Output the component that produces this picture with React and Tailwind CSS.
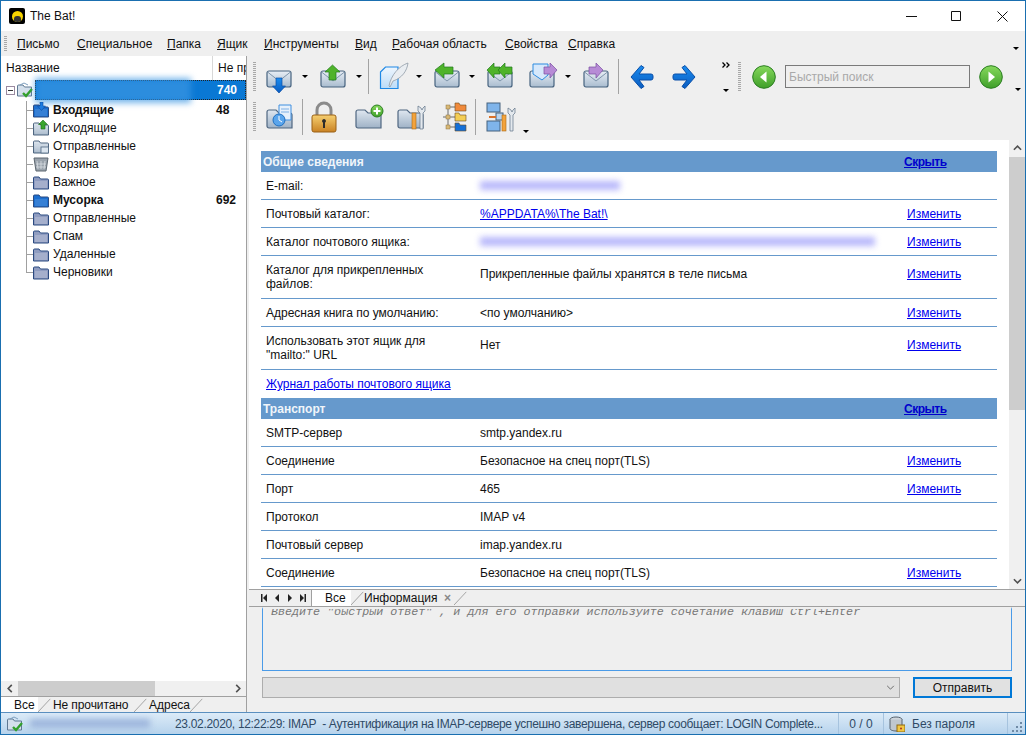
import React from "react";

const BLUE = "text-[#0000ee]";

function Defs() {
  return (
    <svg className="absolute w-0 h-0">
      <defs>
        <linearGradient id="env" x1="0" y1="0" x2="0" y2="1">
          <stop offset="0" stopColor="#e8eef5" />
          <stop offset="1" stopColor="#a9bccf" />
        </linearGradient>
        <linearGradient id="folder" x1="0" y1="0" x2="0" y2="1">
          <stop offset="0" stopColor="#dfe7f0" />
          <stop offset="1" stopColor="#9fb2c6" />
        </linearGradient>
        <linearGradient id="green" x1="0" y1="0" x2="0" y2="1">
          <stop offset="0" stopColor="#86d95c" />
          <stop offset="1" stopColor="#3f9f2a" />
        </linearGradient>
        <linearGradient id="page" x1="0" y1="0" x2="0" y2="1">
          <stop offset="0" stopColor="#eef6fe" />
          <stop offset="1" stopColor="#bcdcf8" />
        </linearGradient>
        <linearGradient id="blueArrow" x1="0" y1="0" x2="0" y2="1">
          <stop offset="0" stopColor="#1a8cf0" />
          <stop offset="1" stopColor="#0a5cc0" />
        </linearGradient>
        <linearGradient id="lock" x1="0" y1="0" x2="0" y2="1">
          <stop offset="0" stopColor="#f6cf70" />
          <stop offset="1" stopColor="#c98224" />
        </linearGradient>
      </defs>
    </svg>
  );
}

function Caret({ className = "" }) {
  return <span className={"w-0 h-0 border-x-[3px] border-x-transparent border-t-[3px] border-t-black shrink-0 " + className} />;
}

function Grip({ className = "" }) {
  return <span className={"w-[3px] shrink-0 bg-[repeating-linear-gradient(to_bottom,#a8a8a8_0,#a8a8a8_1px,transparent_1px,transparent_2px)] " + className} />;
}

function Sep({ className = "" }) {
  return <span className={"w-px bg-[#a3a3a3] shrink-0 " + className} />;
}

// envelope toolbar icon, kind picks the overlay arrow
function Envelope({ kind, className = "" }) {
  return (
    <svg viewBox="0 0 26 26" className={"w-[26px] h-[26px] shrink-0 overflow-visible " + className}>
      <rect x="1" y="7" width="24" height="16" rx="2" fill="url(#env)" stroke="#47637f" strokeWidth="1.2" />
      <path d="M1.500 8 L13 17 L24.500 8" fill="none" stroke="#7e95ab" strokeWidth="1" />
      {kind === "down" && <path d="M10 14h6v8h3.500L13 29l-6.500-7H10z" fill="url(#blueArrow)" stroke="#0b4ea5" strokeWidth=".7" />}
      {kind === "up" && <path d="M12.500 1l7.500 7h-4v8H9V8H5z" fill="#4fb32a" stroke="#1f7a1c" strokeWidth=".7" />}
      {kind === "reply" && <path d="M1 6l9-7v4h9v7h-9v4z" fill="#4fb32a" stroke="#1f7a1c" strokeWidth=".7" />}
      {kind === "replyAll" && (
        <g fill="#4fb32a" stroke="#1f7a1c" strokeWidth=".7">
          <path d="M0 6l7-7v4h6v7H7v4z" />
          <path d="M11 6l7-7v4h7v7h-7v4z" />
        </g>
      )}
      {kind === "forward" && <path d="M20 6l-7-7v4H6v7h7v4z" fill="#b78bd6" stroke="#7a4ea0" strokeWidth=".7" />}
    </svg>
  );
}

function ForwardDoc() {
  return (
    <svg viewBox="0 0 28 26" className="w-[28px] h-[26px] shrink-0 overflow-visible">
      <rect x="1" y="7" width="24" height="16" rx="2" fill="url(#env)" stroke="#47637f" strokeWidth="1.2" />
      <path d="M4 0h15v11l-6 5-9-6z" fill="#d6e8fb" stroke="#2c8be0" strokeWidth="1" />
      <path d="M28 6l-7-7v4h-6v7h6v4z" fill="#b78bd6" stroke="#7a4ea0" strokeWidth=".7" />
    </svg>
  );
}

function NewMail() {
  return (
    <svg viewBox="0 0 28 28" className="w-[28px] h-[28px] shrink-0 overflow-visible">
      <path d="M.5 9l5-5H18v21.500H.5z" fill="url(#page)" stroke="#1e88e5" strokeWidth="1.200" />
      <path d="M9 23C11 12 19 3 28 0c-1 8-6 15-15 18l-3 6z" fill="#e9edf1" stroke="#8f9ba6" strokeWidth=".8" />
    </svg>
  );
}

function NavArrow({ dir }) {
  return (
    <svg viewBox="0 0 24 26" className="w-[24px] h-[26px] shrink-0">
      <path
        d={dir === "left" ? "M11 1.500L1 13l10 11.500 3-2-5-6.500h12a2 2 0 0 0 2-2v-2a2 2 0 0 0-2-2H9l5-6.500z" : "M13 1.500L23 13 13 24.500l-3-2 5-6.500H3a2 2 0 0 1-2-2v-2a2 2 0 0 1 2-2h12l-5-6.500z"}
        fill="url(#blueArrow)"
        stroke="#0a4fa8"
        strokeWidth="1"
      />
    </svg>
  );
}

function GreenRound({ dir }) {
  return (
    <svg viewBox="0 0 24 24" className="w-[24px] h-[24px] shrink-0">
      <circle cx="12" cy="12" r="11.300" fill="url(#green)" stroke="#2b7d22" strokeWidth="1" />
      <path d={dir === "left" ? "M14.500 6.500v11L8 12z" : "M9.500 6.500v11L16 12z"} fill="#fff" />
    </svg>
  );
}

function Folder({ className = "w-[28px] h-[26px]", children }) {
  return (
    <svg viewBox="0 0 28 26" className={"shrink-0 overflow-visible " + className}>
      <path d="M1 8a2 2 0 0 1 2-2h7l3 3h11a2 2 0 0 1 2 2v13H3a2 2 0 0 1-2-2z" fill="url(#folder)" stroke="#4f6680" strokeWidth="1.200" />
      {children}
    </svg>
  );
}

function Lock() {
  return (
    <svg viewBox="0 0 26 32" className="w-[26px] h-[32px] shrink-0">
      <path d="M6 14V9a7 7 0 0 1 14 0v5" fill="none" stroke="#8b8b8b" strokeWidth="3" />
      <rect x="1" y="14" width="24" height="17" rx="2" fill="url(#lock)" stroke="#9a6116" />
      <path d="M13 18a2 2 0 0 1 1 3.700V27h-2v-5.300A2 2 0 0 1 13 18z" fill="#2b2b2b" />
    </svg>
  );
}

function FolderTree() {
  const cols = ["#f08a3c", "#f3cd55", "#1470d8"];
  return (
    <svg viewBox="0 0 24 30" className="w-[24px] h-[30px] shrink-0">
      <path d="M5 5v20M0 15h5M5 5h8M5 15h8M5 25h8" stroke="#6b6b6b" fill="none" />
      {cols.map((c, i) => (
        <g key={c}>
          <rect x="3" y={3 + i * 10} width="4" height="4" fill="#d8b877" stroke="#8d7440" strokeWidth=".5" />
          <path d={`M12 ${1 + i * 10}h4l1 2h6v6H12z`} fill={c} stroke="#6d4a20" strokeWidth=".6" />
        </g>
      ))}
    </svg>
  );
}

function Wrench({ x = 14 }) {
  return (
    <g transform={`translate(${x} 0)`}>
      <rect x="0" y="9" width="4" height="16" fill="#f3a33c" stroke="#a96a17" strokeWidth=".6" />
      <path d="M6 2v5l2 2v16h3V9l2-2V2l-2 2-1 2-1-2z" fill="#e4e9ee" stroke="#5f7286" strokeWidth=".7" />
    </g>
  );
}

function NetTools() {
  return (
    <svg viewBox="0 0 28 30" className="w-[28px] h-[30px] shrink-0 overflow-visible">
      <rect x="1" y="1" width="13" height="9" fill="#7fb4ea" stroke="#47637f" />
      <rect x="1" y="19" width="13" height="10" fill="#7fb4ea" stroke="#47637f" />
      <rect x="10" y="11" width="7" height="7" fill="#b9d4ef" stroke="#47637f" />
      <path d="M3 15h7" stroke="#d9722c" strokeWidth="2" />
      <g transform="translate(2 4)"><Wrench x={14} /></g>
    </svg>
  );
}

// 16px tree icons
function TreeIcon({ type }) {
  const plain = type === "plain" || type === "junk" || type === "inbox";
  const fill = type === "plain" ? "#8f9cc0" : type === "junk" || type === "inbox" ? "#1c6fd0" : "url(#folder)";
  if (type === "trash") {
    return (
      <svg viewBox="0 0 16 16" className="w-[16px] h-[16px] shrink-0">
        <path d="M1 2h14l-2 13H3z" fill="#9aa3ac" stroke="#5d6770" />
        <path d="M4 5l1 8M8 5v8M12 5l-1 8M3 8h10M3 11h10" stroke="#d8dde2" strokeWidth=".8" />
      </svg>
    );
  }
  return (
    <svg viewBox="0 0 16 16" className="w-[16px] h-[16px] shrink-0">
      <path d="M.5 4a1 1 0 0 1 1-1H6l1.500 2h7a1 1 0 0 1 1 1v9H.5z" fill={fill} stroke={plain ? "#2b4a80" : "#4f6680"} />
      <path d="M2 7h12v7H2z" fill="#ffffff" opacity={type === "plain" ? 0.2 : 0.12} />
      {type === "inbox" && <path d="M7 0h3v4h2.500L8.500 8.500 4.500 4H7z" fill="#1c7be0" stroke="#0c4aa0" strokeWidth=".6" />}
      {type === "outbox" && <path d="M10 0l4.500 4.500H12V9H8V4.500H5.500z" fill="#3aa52e" stroke="#1c6d1a" strokeWidth=".6" />}
      {type === "sent" && <rect x="8" y="9" width="7.500" height="6" fill="#dbe5ef" stroke="#4f6680" strokeWidth=".8" />}
    </svg>
  );
}

function AccountIcon() {
  return (
    <svg viewBox="0 0 16 16" className="w-[16px] h-[16px] shrink-0">
      <path d="M.5 4a1 1 0 0 1 1-1H6l1.500 2h7v9H.5z" fill="#d5e0ec" stroke="#5f7892" />
      <path d="M3 3l4-2 4 2" fill="none" stroke="#7fa0c0" />
      <path d="M6 11l3 3 6-7" fill="none" stroke="#33a02c" strokeWidth="2.400" />
    </svg>
  );
}

function Mnemonic({ text }) {
  return (
    <span>
      <u>{text[0]}</u>
      {text.slice(1)}
    </span>
  );
}

const menu = [
  ["Письмо", "w-[60px]"],
  ["Специальное", "w-[90px]"],
  ["Папка", "w-[50px]"],
  ["Ящик", "w-[47px]"],
  ["Инструменты", "w-[91px]"],
  ["Вид", "w-[37px]"],
  ["Рабочая область", "w-[113px]"],
  ["Свойства", "w-[63px]"],
  ["Справка", "w-[60px]"],
];

const folders = [
  ["Входящие", "inbox", "48", true],
  ["Исходящие", "outbox"],
  ["Отправленные", "sent"],
  ["Корзина", "trash"],
  ["Важное", "plain"],
  ["Мусорка", "junk", "692", true],
  ["Отправленные", "plain"],
  ["Спам", "plain"],
  ["Удаленные", "plain"],
  ["Черновики", "plain"],
];

function Section({ title }) {
  return (
    <div className="h-[21px] bg-[#6699cc] flex items-center pl-[2px] text-[#f0f5fa] font-bold">
      <span className="w-[641px]">{title}</span>
      <a className="underline text-[#0000cc] tracking-[-0.5px]">Скрыть</a>
    </div>
  );
}

function Row({ label, value, link, valueLink, blur, tall, last }) {
  return (
    <div className={"flex border-[#6699cc] " + (tall || "h-[28px]") + (last ? "" : " border-b") + (tall ? " items-start" : " items-center")}>
      <div className={"w-[219px] pl-[5px] pr-[40px] shrink-0 leading-[14px] " + (tall ? "pt-[7px]" : "")}>{label}</div>
      <div className={"w-[427px] shrink-0 leading-[14px] " + (tall ? "pt-[11px]" : "")}>
        {valueLink && <a className={"underline " + BLUE}>{value}</a>}
        {blur && <div className={"h-[9px] bg-[#b7b7fb] blur-[3px] " + blur} />}
        {!valueLink && !blur && value}
      </div>
      {link && <a className={"underline leading-[14px] " + BLUE + (tall ? " pt-[11px]" : "")}>Изменить</a>}
    </div>
  );
}

function Toolbar1() {
  return (
    <div className="h-[41px] flex items-center shrink-0">
      <Grip className="h-[30px] ml-[4px]" />
      <Envelope kind="down" className="ml-[10px]" />
      <Caret className="ml-[10px]" />
      <Envelope kind="up" className="ml-[12px]" />
      <Caret className="ml-[10px]" />
      <Sep className="h-[35px] ml-[6px]" />
      <div className="ml-[11px]"><NewMail /></div>
      <Caret className="ml-[8px]" />
      <Envelope kind="reply" className="ml-[12px]" />
      <Caret className="ml-[9px]" />
      <Envelope kind="replyAll" className="ml-[12px]" />
      <div className="ml-[16px]"><ForwardDoc /></div>
      <Caret className="ml-[8px]" />
      <Envelope kind="forward" className="ml-[12px]" />
      <Sep className="h-[35px] ml-[9px]" />
      <div className="ml-[11px]"><NavArrow dir="left" /></div>
      <div className="ml-[18px]"><NavArrow dir="right" /></div>
      <div className="ml-[26px] w-[8px] h-[30px] flex flex-col justify-between items-center shrink-0">
        <svg viewBox="0 0 8 6" className="w-[8px] h-[6px] shrink-0">
          <path d="M.5.500L3 3 .5 5.500M4.500.500L7 3 4.500 5.500" fill="none" stroke="#000" strokeWidth="1.300" />
        </svg>
        <Caret />
      </div>
      <Grip className="h-[30px] ml-[8px]" />
      <div className="ml-[11px]"><GreenRound dir="left" /></div>
      <div className="ml-[9px] w-[185px] h-[23px] border border-[#7a7a7a] flex items-center pl-[3px] text-[#a9a9a9]">Быстрый поиск</div>
      <div className="ml-[9px]"><GreenRound dir="right" /></div>
      <Caret className="ml-[12px] self-end mb-[6px]" />
    </div>
  );
}

function Toolbar2() {
  return (
    <div className="h-[43px] flex items-center shrink-0 pb-[3px]">
      <Grip className="h-[30px] ml-[4px]" />
      <div className="ml-[10px]">
        <Folder>
          <path d="M13 1h12v15H13z" fill="#e6f0fb" stroke="#3f8fe0" />
          <path d="M15 5h8M15 8h8" stroke="#7fb0e4" />
          <circle cx="13" cy="16" r="6" fill="#5aa5ec" stroke="#1f6fc0" />
          <path d="M13 12v4l3 2" fill="none" stroke="#fff" />
        </Folder>
      </div>
      <Sep className="h-[36px] ml-[8px]" />
      <div className="ml-[8px]"><Lock /></div>
      <div className="ml-[18px]">
        <Folder>
          <circle cx="22" cy="7" r="6" fill="url(#green)" stroke="#2b7d22" />
          <path d="M22 3.500v7M18.500 7h7" stroke="#fff" strokeWidth="2" />
        </Folder>
      </div>
      <div className="ml-[14px]">
        <Folder><Wrench x={15} /></Folder>
      </div>
      <div className="ml-[18px]"><FolderTree /></div>
      <Sep className="h-[36px] ml-[8px]" />
      <div className="ml-[10px]"><NetTools /></div>
      <Caret className="ml-[9px] self-end mb-[4px]" />
    </div>
  );
}

function Scrollbar() {
  return (
    <div className="w-[16px] bg-[#f0f0f0] flex flex-col items-center shrink-0 text-[#505050]">
      <svg viewBox="0 0 10 6" className="w-[9px] h-[6px] mt-[5px] shrink-0">
        <path d="M1 5l4-4 4 4" fill="none" stroke="currentColor" strokeWidth="1.800" />
      </svg>
      <div className="w-[16px] h-[253px] bg-[#cdcdcd] mt-[6px] shrink-0" />
      <svg viewBox="0 0 10 6" className="w-[9px] h-[6px] mt-auto mb-[5px] shrink-0">
        <path d="M1 1l4 4 4-4" fill="none" stroke="currentColor" strokeWidth="1.800" />
      </svg>
    </div>
  );
}

function Slant() {
  return (
    <svg viewBox="0 0 16 16" className="w-[14px] h-[16px] shrink-0">
      <path d="M0 16L14 1" stroke="#9a9a9a" fill="none" />
    </svg>
  );
}

function NavGlyph({ d }) {
  return (
    <svg viewBox="0 0 8 8" className="w-[8px] h-[8px] shrink-0">
      <path d={d} fill="#222" />
    </svg>
  );
}

function LeftPane() {
  return (
    <div className="w-[246px] shrink-0 bg-white flex flex-col border-r border-[#a0a0a0]">
      <div className="h-[24px] flex items-center shrink-0 whitespace-nowrap">
        <span className="w-[211px] pl-[5px] shrink-0">Название</span>
        <span className="border-l border-[#d8d8d8] h-full flex items-center pl-[5px] overflow-hidden">Не пр</span>
      </div>
      <div className="flex items-center h-[20px] shrink-0 relative">
        <span className="ml-[5px] w-[9px] h-[9px] border border-[#9a8aa0] flex items-center justify-center shrink-0">
          <span className="w-[5px] h-px bg-[#333]" />
        </span>
        <span className="ml-[2px]"><AccountIcon /></span>
        <div className="ml-[2px] flex-1 h-[20px] bg-[#0a78d4] border border-dotted border-[#222] flex items-center justify-end pr-[8px] text-white font-bold">
          740
        </div>
        {/* blurred account name over the selection */}
        <div className="absolute left-[34px] top-[-2px] w-[156px] h-[25px] bg-[#3b95e2]/70 blur-[3px]" />
      </div>
      <div className="relative pl-[25px] mt-px flex-1 min-h-0">
        <span className="absolute left-[25px] top-0 h-[172px] w-px bg-[#a0a0a0]" />
        {folders.map(([name, type, count, bold], i) => (
          <div key={name + i} className="h-[18px] flex items-center">
            <span className="w-[7px] h-px bg-[#a0a0a0] shrink-0" />
            <TreeIcon type={type} />
            <span className={"ml-[4px] w-[163px] shrink-0 " + (bold ? "font-bold" : "")}>{name}</span>
            {count && <span className="font-bold">{count}</span>}
          </div>
        ))}
      </div>
      <div className="h-[15px] bg-[#f0f0f0] flex items-center shrink-0">
        <svg viewBox="0 0 6 10" className="w-[6px] h-[9px] ml-[6px] shrink-0">
          <path d="M5 1L1 5l4 4" fill="none" stroke="#505050" strokeWidth="1.800" />
        </svg>
        <div className="w-[137px] h-full bg-[#cdcdcd] ml-[5px]" />
        <svg viewBox="0 0 6 10" className="w-[6px] h-[9px] ml-auto mr-[5px] shrink-0">
          <path d="M1 1l4 4-4 4" fill="none" stroke="#505050" strokeWidth="1.800" />
        </svg>
      </div>
      <div className="h-[16px] bg-[#efefef] border-t border-[#a0a0a0] flex items-center shrink-0 leading-none whitespace-nowrap">
        <span className="h-full w-[37px] bg-white flex items-center pl-[13px] shrink-0">Все</span>
        <Slant />
        <span className="w-[82px] pl-[1px] shrink-0 tracking-[-0.1px]">Не прочитано</span>
        <Slant />
        <span className="pl-[1px]">Адреса</span>
        <Slant />
      </div>
    </div>
  );
}

function InfoPanel() {
  return (
    <div className="h-[449px] bg-white flex shrink-0">
      <div className="flex-1 min-w-0 overflow-hidden pl-[12px] pr-[12px] pt-[11px]">
        <Section title="Общие сведения" />
        <Row label="E-mail:" blur="w-[140px]" />
        <Row label="Почтовый каталог:" value="%APPDATA%\The Bat!\" valueLink link />
        <Row label="Каталог почтового ящика:" blur="w-[395px]" link />
        <Row label="Каталог для прикрепленных файлов:" value="Прикрепленные файлы хранятся в теле письма" link tall="h-[43px]" />
        <Row label="Адресная книга по умолчанию:" value="<по умолчанию>" link />
        <Row label={'Использовать этот ящик для "mailto:" URL'} value="Нет" link tall="h-[43px]" />
        <div className="h-[28px] flex items-center pl-[5px]">
          <a className={"underline " + BLUE}>Журнал работы почтового ящика</a>
        </div>
        <Section title="Транспорт" />
        <Row label="SMTP-сервер" value="smtp.yandex.ru" />
        <Row label="Соединение" value="Безопасное на спец порт(TLS)" link />
        <Row label="Порт" value="465" link />
        <Row label="Протокол" value="IMAP v4" />
        <Row label="Почтовый сервер" value="imap.yandex.ru" />
        <Row label="Соединение" value="Безопасное на спец порт(TLS)" link />
      </div>
      <Scrollbar />
    </div>
  );
}

function ReplyPanel() {
  return (
    <div className="flex-1 min-h-0 pl-[13px] pr-[13px] flex flex-col">
      <div className="h-[64px] border-x border-b border-t-2 border-x-[#4a9be8] border-b-[#4a9be8] border-t-[#efefef] overflow-hidden shrink-0 pl-[8px]">
        <div className="font-['Liberation_Mono',monospace] italic text-[#777] text-[11.7px] leading-[14px] mt-[-4px] whitespace-nowrap">
          {'Введите  "быстрый ответ" , и для его отправки используйте сочетание клавиш  Ctrl+Enter'}
        </div>
      </div>
      <div className="flex mt-[6px] shrink-0">
        <div className="w-[638px] h-[21px] bg-[#e0e0e0] border border-[#adadad] flex items-center justify-end pr-[4px]">
          <svg viewBox="0 0 10 6" className="w-[9px] h-[5px]">
            <path d="M1 1l4 4 4-4" fill="none" stroke="#555" />
          </svg>
        </div>
        <button className="ml-[13px] w-[99px] h-[21px] bg-[#e1e1e1] border-2 border-[#0078d7] flex items-center justify-center">Отправить</button>
      </div>
    </div>
  );
}

function StatusBar() {
  return (
    <div className="h-[22px] flex items-stretch shrink-0 border-t border-[#5a8fbf] bg-[linear-gradient(to_bottom,#dcebf8,#b7d3ec)] text-[#2f4a66]">
      <div className="w-[168px] flex items-center pl-[6px] shrink-0">
        <AccountIcon />
        <div className="ml-[7px] w-[120px] h-[9px] bg-[#9db5dc] blur-[3px]" />
      </div>
      <div className="w-[670px] shrink-0 flex items-center pl-[6px] border-r border-[#a6c3de] whitespace-nowrap overflow-hidden tracking-[-0.32px]">
        23.02.2020, 12:22:29: IMAP&nbsp; - Аутентификация на IMAP-сервере успешно завершена, сервер сообщает: LOGIN Complete...
      </div>
      <div className="w-[45px] shrink-0 flex items-center justify-center border-r border-[#a6c3de]">0 / 0</div>
      <div className="w-[124px] shrink-0 flex items-center pl-[5px] border-r border-[#a6c3de]">
        <svg viewBox="0 0 16 16" className="w-[16px] h-[16px] shrink-0">
          <ellipse cx="7" cy="3.500" rx="6" ry="2.500" fill="#d0d6dc" stroke="#56626e" />
          <path d="M1 3.500v9c0 1.500 3 2.500 6 2.500s6-1 6-2.500v-9" fill="#bfc7cf" stroke="#56626e" />
          <rect x="8" y="9" width="8" height="7" fill="#f2c744" stroke="#8d6a10" />
          <circle cx="12" cy="12.500" r="1" fill="#a32" />
        </svg>
        <span className="ml-[7px]">Без пароля</span>
      </div>
      <div className="flex-1 flex items-end justify-end pb-[2px] pr-[2px]">
        <svg viewBox="0 0 11 11" className="w-[11px] h-[11px]">
          <path d="M8 1h2v2H8zM4 5h2v2H4zM8 5h2v2H8zM0 9h2v2H0zM4 9h2v2H4zM8 9h2v2H8z" fill="#6f8aa5" />
        </svg>
      </div>
    </div>
  );
}

export default function App() {
  return (
    <div className="w-[1026px] h-[735px] border border-[#1a6fb0] bg-[#efefef] flex flex-col overflow-hidden text-[12px] text-[#111] font-['Liberation_Sans',sans-serif]">
      <Defs />
      {/* Title bar */}
      <div className="h-[30px] bg-white flex items-center shrink-0 whitespace-nowrap">
        <span className="ml-[8px] w-[16px] h-[16px] bg-black rounded-[2px] flex items-center justify-center shrink-0">
          <span className="w-[11px] h-[11px] rounded-full bg-[#f7d400] flex items-end justify-center overflow-hidden">
            <span className="w-[7px] h-[6px] bg-[#333] rounded-t-[3px]" />
          </span>
        </span>
        <span className="ml-[5px]">The Bat!</span>
        <svg viewBox="0 0 11 11" className="w-[11px] h-[11px] ml-auto shrink-0">
          <path d="M0 5.500h11" stroke="#111" />
        </svg>
        <svg viewBox="0 0 11 11" className="w-[11px] h-[11px] ml-[34px] shrink-0">
          <path d="M.5.500h9v9h-9z" fill="none" stroke="#111" />
        </svg>
        <svg viewBox="0 0 11 11" className="w-[11px] h-[11px] ml-[35px] mr-[17px] shrink-0">
          <path d="M.5.500l10 10M10.500.500l-10 10" stroke="#111" />
        </svg>
      </div>
      {/* Menu */}
      <div className="h-[25px] flex items-center shrink-0">
        <Grip className="h-[16px] ml-[3px]" />
        <div className="flex ml-[10px]">
          {menu.map(([m, w]) => (
            <span key={m} className={w}>
              <Mnemonic text={m} />
            </span>
          ))}
        </div>
        <Caret className="ml-[385px] self-end mb-[6px]" />
      </div>
      <div className="flex flex-1 min-h-0">
        <LeftPane />
        <div className="flex-1 min-w-0 ml-[2px] flex flex-col">
          <Toolbar1 />
          <Toolbar2 />
          <InfoPanel />
          <div className="h-[18px] flex items-center shrink-0 border-y border-[#a0a0a0] whitespace-nowrap">
            <div className="ml-[6px] w-[57px] h-full flex items-center justify-around border-r border-[#a0a0a0] px-[2px]">
              <NavGlyph d="M1 0h1.500v8H1zM7 0v8L3 4z" />
              <NavGlyph d="M6 0v8L2 4z" />
              <NavGlyph d="M2 0v8l4-4z" />
              <NavGlyph d="M7 0h-1.500v8H7zM1 0v8l4-4z" />
            </div>
            <span className="w-[39px] h-full bg-white flex items-center pl-[13px] shrink-0">Все</span>
            <Slant />
            <span className="ml-[-2px] pl-[1px] w-[81px] shrink-0">Информация</span>
            <span className="text-[#888] font-bold leading-none">×</span>
            <span className="ml-[3px]"><Slant /></span>
          </div>
          <ReplyPanel />
        </div>
      </div>
      <StatusBar />
    </div>
  );
}
